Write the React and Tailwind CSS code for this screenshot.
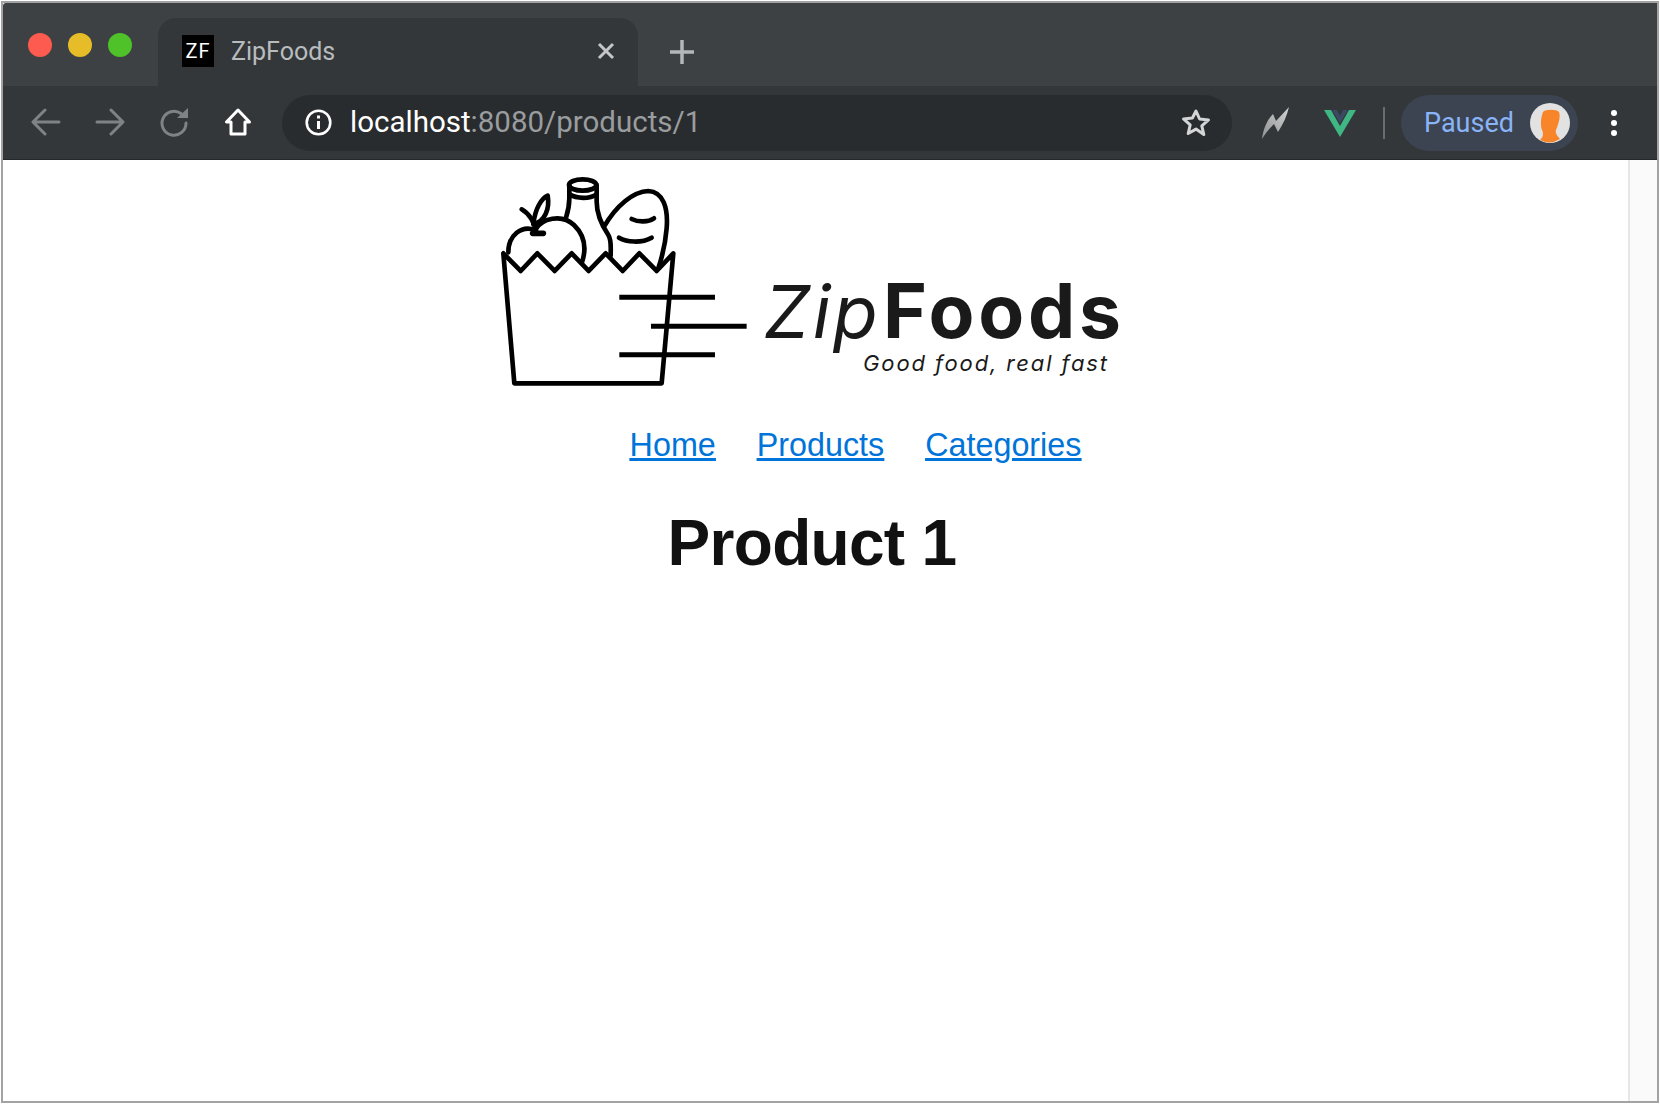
const font = { fontFamily: "Roboto, sans-serif" };

function TrafficLights() {
  return (
    <div className="flex gap-4 pl-[25px] pt-[30px] w-[155px] shrink-0">
      <span className="h-6 w-6 rounded-full bg-[#fd5b50]" />
      <span className="h-6 w-6 rounded-full bg-[#e6bd28]" />
      <span className="h-6 w-6 rounded-full bg-[#4fc22a]" />
    </div>
  );
}

function TabStrip() {
  return (
    <div className="flex h-[83px] shrink-0 rounded-tl-[3px] bg-[#3d4144]">
      <TrafficLights />
      <div className="mt-[15px] flex h-[68px] w-[480px] items-center rounded-t-[18px] bg-[#33373a] pb-[2px] pl-6 pr-[22px]">
        <div className="flex h-8 w-8 items-center justify-center bg-black text-[20px] tracking-[1px] text-white" style={font}>
          ZF
        </div>
        <span className="ml-[17px] flex-1 pt-[2px] text-[25px] text-[#b9bcbe]" style={font}>ZipFoods</span>
        <svg width="20" height="20" viewBox="0 0 20 20" stroke="#c4c6c8" strokeWidth="3">
          <path d="M3 3l14 14M17 3L3 17" />
        </svg>
      </div>
      <svg className="ml-[31px] mt-[36px]" width="26" height="26" viewBox="0 0 26 26" stroke="#b4b7b9" strokeWidth="3.5">
        <path d="M13 1v24M1 13h24" />
      </svg>
    </div>
  );
}

function NavIcons() {
  return (
    <div className="mb-[2px] flex w-[279px] shrink-0 items-center pl-[28px]">
      <svg width="30" height="28" viewBox="0 0 30 28" fill="none" stroke="#7f8385" strokeWidth="3" strokeLinecap="round" strokeLinejoin="round">
        <path d="M28 14H3M14 2L2 14l12 12" />
      </svg>
      <svg className="ml-[34px]" width="30" height="28" viewBox="0 0 30 28" fill="none" stroke="#7f8385" strokeWidth="3" strokeLinecap="round" strokeLinejoin="round">
        <path d="M2 14h25M16 2l12 12-12 12" />
      </svg>
      <svg className="ml-[35px]" width="30" height="30" viewBox="0 0 30 30" fill="none">
        <path d="M21 6.5A12 12 0 1 0 26 16" stroke="#7f8385" strokeWidth="3" strokeLinecap="round" />
        <path d="M17 11L28 1v10z" fill="#7f8385" />
      </svg>
      <svg className="ml-[34px]" width="28" height="28" viewBox="0 0 28 28" fill="none" stroke="#fff" strokeWidth="3" strokeLinejoin="round">
        <path d="M14 2L2.5 14H7v12h14V14h4.5z" />
      </svg>
    </div>
  );
}

function AddressBar() {
  return (
    <div className="flex h-14 w-[950px] shrink-0 items-center rounded-full bg-[#292c2e] pl-[23px] pr-[21px]">
      <svg width="27" height="27" viewBox="0 0 27 27" fill="none" stroke="#fff">
        <circle cx="13.5" cy="13.5" r="11.8" strokeWidth="2.6" />
        <path d="M13.5 12v8" strokeWidth="3" />
        <path d="M13.5 6.5v3" strokeWidth="3" />
      </svg>
      <div className="ml-[18px] flex-1 text-[29.5px] leading-none text-[#fff]" style={font}>
        localhost<span className="text-[#9a9d9f]">:8080/products/1</span>
      </div>
      <svg width="30" height="30" viewBox="0 0 30 30" fill="none" stroke="#d4d5d6" strokeWidth="3" strokeLinejoin="round">
        <path d="M15 3l3.6 8 8.9.9-6.7 5.9 2 8.7L15 21.1l-7.8 4.4 2-8.7-6.700-5.900 8.900-.9z" />
      </svg>
    </div>
  );
}

function Extensions() {
  return (
    <div className="flex flex-1 items-center">
      <svg className="ml-[29px]" width="30" height="34" viewBox="0 0 30 34">
        <defs>
          <linearGradient id="bolt" x1="0" y1="1" x2="1" y2="0">
            <stop offset="0" stopColor="#8f9192" />
            <stop offset="1" stopColor="#d2d2d2" />
          </linearGradient>
        </defs>
        <path d="M1 33C2 24 6 14 12 8l3 7L28 1c-2 9-6 17-11 25l-4-8C9 22 4 28 1 33z" fill="url(#bolt)" />
      </svg>
      <svg className="ml-[33px]" width="32" height="28" viewBox="0 0 32 28">
        <path d="M0 1h7l9 16 9-16h7L16 28z" fill="#3fb683" />
        <path d="M8 1h5l3 6 3-6h5l-8 13z" fill="#3a4a63" />
      </svg>
      <span className="ml-[27px] h-8 w-[2px] bg-[#6a6d6f]" />
      <div className="ml-4 flex h-14 w-[177px] items-center rounded-full bg-[#3c4452] pl-[23px]">
        <span className="w-[106px] pt-[2px] text-[27px] text-[#8ab4f8]" style={font}>Paused</span>
        <svg width="40" height="40" viewBox="0 0 40 40">
          <circle cx="20" cy="20" r="20" fill="#e2e2e2" />
          <path d="M13 9c2-3 14-3 16 0 2 5-1 13-3 18-1 3 1 6 4 9a20 20 0 0 1-20 1c3-3 4-6 2-10-2-5-1-13 1-18z" fill="#f9852b" />
        </svg>
      </div>
      <div className="ml-[33px] flex flex-col gap-1">
        <span className="h-[6px] w-[6px] rounded-full bg-white" />
        <span className="h-[6px] w-[6px] rounded-full bg-white" />
        <span className="h-[6px] w-[6px] rounded-full bg-white" />
      </div>
    </div>
  );
}

function Logo() {
  return (
    <svg className="mr-[14px] mt-[5px] block" width="660" height="225" viewBox="480 165 660 225">
      <g transform="translate(481 165) scale(0.3333)" fill="none" stroke="#000" strokeWidth="14" strokeLinejoin="round" strokeLinecap="round">
        <path d="M70 265L103 655H545L580 265L530 318L478 265L428 318L377 265L326 318L275 265L224 318L172 265L122 318Z" />
        <path d="M85 262C85 210 125 180 165 195C185 160 245 145 282 180C315 212 320 250 306 292" />
        <path d="M170 205C165 180 155 150 125 133" />
        <path d="M160 178C165 130 185 100 203 92C210 130 195 170 160 178Z" />
        <path d="M158 205H190" strokeWidth="17" />
        <ellipse cx="308" cy="60" rx="41" ry="17" />
        <path d="M268 60V100C268 120 264 140 258 158" />
        <path d="M268 88C290 102 330 102 350 88" />
        <path d="M350 60V110C350 150 365 180 385 210C395 225 392 245 392 272" />
        <path d="M372 185C410 120 460 80 505 78C550 80 565 130 560 190C556 240 545 280 535 310" />
        <path d="M455 162C475 172 505 172 522 160" />
        <path d="M417 218C440 232 485 235 515 218" />
        <g strokeWidth="15" strokeLinecap="butt">
          <path d="M418 397H705" />
          <path d="M513 484H800" />
          <path d="M418 569H705" />
        </g>
      </g>
      <text x="765" y="338" fontFamily="Inter, sans-serif" fontSize="73" fontStyle="italic" fill="#1a1a1a" letterSpacing="2.7">Zip</text>
      <text x="884" y="338" fontFamily="Inter, sans-serif" fontSize="75" fontWeight="700" fill="#1a1a1a" letterSpacing="3.7">Foods</text>
      <text x="864" y="371" fontFamily="Inter, sans-serif" fontSize="22" fontStyle="italic" fill="#1a1a1a" letterSpacing="1.9">Good food, real fast</text>
    </svg>
  );
}

export default function App() {
  return (
    <div className="flex h-[1104px] w-[1660px] flex-col overflow-hidden bg-white">
      <div className="m-[1px] flex flex-1 flex-col border-2 border-[#a3a3a3]">
        <TabStrip />
        <div className="flex h-[74px] shrink-0 items-center border-b border-[#26292b] bg-[#33373a]">
          <NavIcons />
          <AddressBar />
          <Extensions />
        </div>
        <div className="flex flex-1">
          <main className="flex flex-1 flex-col items-center" style={{ fontFamily: '"Liberation Sans", Arial, sans-serif' }}>
            <Logo />
            <nav className="mt-[37px] flex gap-[41px] pl-[80px] text-[32.3px] leading-9 text-[#0074d9] underline">
              <a href="#">Home</a>
              <a href="#">Products</a>
              <a href="#">Categories</a>
            </nav>
            <h1 className="mr-[7px] mt-[44px] text-[64px] font-bold leading-[72px] tracking-[-0.7px] text-[#111111]">
              Product 1
            </h1>
          </main>
          <div className="w-[29px] shrink-0 border-l-2 border-[#e6e6e6] bg-[#fafafa]" />
        </div>
      </div>
    </div>
  );
}
